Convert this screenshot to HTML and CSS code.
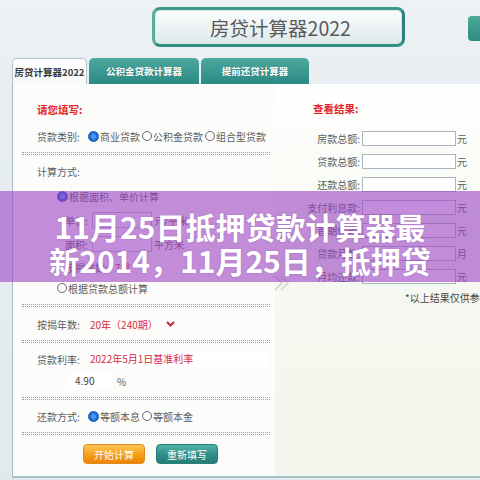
FILE: index.html
```html
<!DOCTYPE html>
<html lang="zh-CN">
<head>
<meta charset="utf-8">
<title>房贷计算器2022</title>
<link rel="stylesheet" href="styles.css">
</head>
<body>
<div class="page">
  <header class="top">
    <div class="title-box">房贷计算器2022</div>
    <div class="side-btn"></div>
  </header>
  <nav class="tabs">
    <div class="tab active">房贷计算器2022</div>
    <div class="tab t2">公积金贷款计算器</div>
    <div class="tab t3">提前还贷计算器</div>
  </nav>
  <main class="panel">
    <section class="form-col">
      <div class="row r-a"><span class="sec-title">请您填写:</span></div>
      <div class="row r-b"><span class="label">贷款类别:</span><span class="radio on"></span>商业贷款<span class="radio"></span>公积金贷款<span class="radio"></span>组合型贷款</div>
      <div class="dots d1"></div>
      <div class="row r-c"><span class="label">计算方式:</span></div>
      <div class="row sub1"><span class="radio on"></span>根据面积、单价计算</div>
      <div class="row sub2"><span class="slabel">单价:</span><span class="box"></span><span class="unit">元/平米</span></div>
      <div class="row sub2"><span class="slabel">面积:</span><span class="box"></span><span class="unit">平方米</span></div>
      <div class="row sub2 r-g"><span class="slabel wide">按揭成数:</span><span class="red">7成</span></div>
      <div class="row sub1 r-h"><span class="radio"></span>根据贷款总额计算</div>
      <div class="dots d2"></div>
      <div class="row r-i"><span class="label wl">按揭年数:</span><span class="red">20年（240期）</span><svg class="chev" width="9" height="6" viewBox="0 0 9 6"><path d="M1 1 L4.5 4.5 L8 1" fill="none" stroke="#c8263c" stroke-width="2"/></svg></div>
      <div class="dots"></div>
      <div class="row r-j"><span class="label wl">贷款利率:</span><span class="select red">2022年5月1日基准利率</span></div>
      <div class="row r-k"><span class="rate">4.90</span><span class="pct">%</span></div>
      <div class="dots d3"></div>
      <div class="row r-l"><span class="label">还款方式:</span><span class="radio on"></span>等额本息<span class="radio"></span>等额本金</div>
      <div class="dots"></div>
      <div class="row r-m"><span class="btn orange">开始计算</span><span class="btn teal">重新填写</span></div>
    </section>
    <div class="divider"></div>
    <section class="result-col">
      <div class="res-title"><span class="sec-title">查看结果:</span></div>
      <div class="res-grid">
        <span class="rlabel">房款总额:</span><span class="rbox"></span><span class="runit">元</span>
        <span class="rlabel">贷款总额:</span><span class="rbox"></span><span class="runit">元</span>
        <span class="rlabel">还款总额:</span><span class="rbox"></span><span class="runit">元</span>
        <span class="rlabel">支付利息款:</span><span class="rbox"></span><span class="runit">元</span>
        <span class="rlabel">首期付款:</span><span class="rbox"></span><span class="runit">元</span>
        <span class="rlabel">贷款月数:</span><span class="rbox"></span><span class="runit">月</span>
        <span class="rlabel">月均还款:</span><span class="rbox"></span><span class="runit">元</span>
      </div>
      <div class="note">*以上结果仅供参考</div>
      <svg class="arrows" width="18" height="16" viewBox="0 0 18 16"><path d="M2 1 L9 8 L2 15 M8 1 L15 8 L8 15" fill="none" stroke="#cfd6cc" stroke-width="1.5"/></svg>
    </section>
  </main>
</div>
<div class="banner">
  <p class="banner-text">11月25日抵押贷款计算器最<br>新2014，11月25日，抵押贷</p>
</div>
</body>
</html>
```
FILE: styles.css
```css
* { box-sizing: border-box; margin: 0; padding: 0; }
html, body { width: 480px; height: 480px; overflow: hidden; }
body {
  background: #e4eaee;
  font-family: "Noto Sans CJK SC", "Microsoft YaHei", sans-serif;
  font-size: 10px;
  color: #5c5c5c;
  position: relative;
}
.page {
  height: 480px;
  padding-top: 7px;
  background: linear-gradient(#eef2f4, #e8eef1 84px, #e2e9ed);
}
.top { display: flex; align-items: flex-start; height: 40px; }
.title-box {
  margin-left: 152px;
  width: 253px;
  height: 40px;
  border: 3px solid #3c9888;
  border-left-color: #5aae96;
  border-right-color: #2e7f83;
  border-bottom-color: #349084;
  border-radius: 8px;
  background: linear-gradient(#fbfdfd, #dde9eb);
  box-shadow: inset 0 0 0 1px #d7ebe6;
  display: flex;
  align-items: center;
  justify-content: center;
  font-size: 19.5px;
  color: #5a5a5a;
  padding-left: 4px;
}
.side-btn {
  margin-left: auto;
  margin-top: 9px;
  width: 12px;
  height: 25px;
  border-radius: 4px 0 0 4px;
  background: linear-gradient(#4cab98, #2f897f);
}
.tabs { display: flex; gap: 2px; margin-top: 11px; padding-left: 12px; height: 26px; }
.tab {
  width: 110px;
  height: 26px;
  border-radius: 5px 5px 0 0;
  background: linear-gradient(#4ba99e, #2b8885);
  color: #fff;
  font-weight: bold;
  font-size: 9.5px;
  display: flex;
  align-items: center;
  justify-content: center;
  text-shadow: 0 0 1px rgba(0, 60, 60, 0.4);
}
.tab.t3 { width: 108px; }
.tab.active {
  width: 75px;
  background: linear-gradient(#ffffff, #f7fafa);
  color: #3a3a3a;
  border: 1px solid #b3c4cc;
  border-bottom: none;
  text-shadow: none;
}
.panel {
  display: flex;
  margin-left: 12px;
  height: 394px;
  border-left: 1px solid #a3b9c6;
  border-bottom: 2px solid #a9c0cd;
}
.form-col {
  width: 270px;
  background: #fcfdfb;
  padding: 13px 5px 0 9px;
}
.divider { width: 2px; background: linear-gradient(to right, #e6e9df, #dbe1d2); }
.result-col {
  flex: 1;
  position: relative;
  background: linear-gradient(#ffffff, #f6f9f1 40%, #f2f6ec);
  padding-top: 12px;
}
.row { display: flex; align-items: center; height: 24px; padding-left: 15px; white-space: nowrap; }
.r-b { margin-top: 3px; }
.r-c { margin-top: 4px; }
.sub1 { margin-top: 1px; padding-left: 33px; }
.sub2 { padding-left: 43px; }
.r-g { height: 22px; }
.r-h { height: 20px; margin-top: 0; }
.r-i { margin-top: 5px; }
.r-j { margin-top: 4px; }
.r-k { height: 20px; padding-left: 48px; }
.r-l { margin-top: 4px; }
.r-m { margin-top: 9px; height: 20px; padding-left: 61px; gap: 11px; }
.sec-title { color: #e2262b; font-weight: bold; font-size: 10.5px; }
.label { width: 49px; }
.label.wl { width: 53px; }
.slabel { width: 27px; }
.slabel.wide { width: 50px; }
.dots {
  height: 3px;
  margin-top: 4px;
  border-top: 1px dotted #84a8a6;
  border-bottom: 1px dotted #84a8a6;
}
.d2 { margin-top: 6px; }
.d3 { margin-top: 6px; }
.radio {
  display: inline-block;
  flex: none;
  width: 10px;
  height: 10px;
  border-radius: 50%;
  border: 1px solid #666;
  background: #fff;
  margin: 0 1px 0 2px;
}
.radio.on {
  width: 11px;
  height: 11px;
  border-color: #1b4c9e;
  background: radial-gradient(circle, #4d95f0 0 2px, #1f6fdc 3px);
}
.box { width: 60px; height: 16px; border: 1px solid #b3bec6; background: #fff; }
.unit { margin-left: 2px; }
.red { color: #d92a3c; }
.chev { margin-left: 8px; }
.select { width: 180px; height: 16px; line-height: 16px; background: #fff; }
.rate { width: 43px; height: 18px; line-height: 18px; background: #fff; padding-left: 5px; color: #444; }
.pct { margin-left: 4px; }
.btn {
  width: 62px;
  height: 20px;
  border-radius: 4px;
  color: #fff;
  display: flex;
  align-items: center;
  justify-content: center;
  font-size: 10px;
}
.btn.orange { background: linear-gradient(#fdc854, #f59d18 55%, #ee8608); border: 1px solid #e0891a; }
.btn.teal { background: linear-gradient(#52b1a7, #2f8d86 55%, #267d78); border: 1px solid #2a7e78; }
.res-title { height: 24px; display: flex; align-items: center; padding-left: 38px; margin-bottom: 7px; }
.res-grid {
  display: grid;
  grid-template-columns: 85px 94px auto;
  grid-auto-rows: 23px;
  column-gap: 2px;
  align-items: center;
  white-space: nowrap;
}
.rlabel { text-align: right; }
.rbox { width: 94px; height: 15px; border: 1px solid #a9b6bf; background: #fff; }
.runit { margin-left: -1px; }
.note { height: 20px; line-height: 20px; padding-left: 130px; white-space: nowrap; color: #444; }
.arrows { position: absolute; left: -2px; top: 191px; }
.banner {
  position: absolute;
  left: 0;
  top: 191px;
  width: 480px;
  height: 91px;
  background: rgba(155, 65, 195, 0.6);
  padding-top: 18px;
}
.banner-text {
  color: #fff;
  font-weight: bold;
  font-size: 30px;
  line-height: 34px;
  text-align: center;
  white-space: nowrap;
  text-shadow: 0 0 2px rgba(80, 30, 100, 0.25);
}
```
